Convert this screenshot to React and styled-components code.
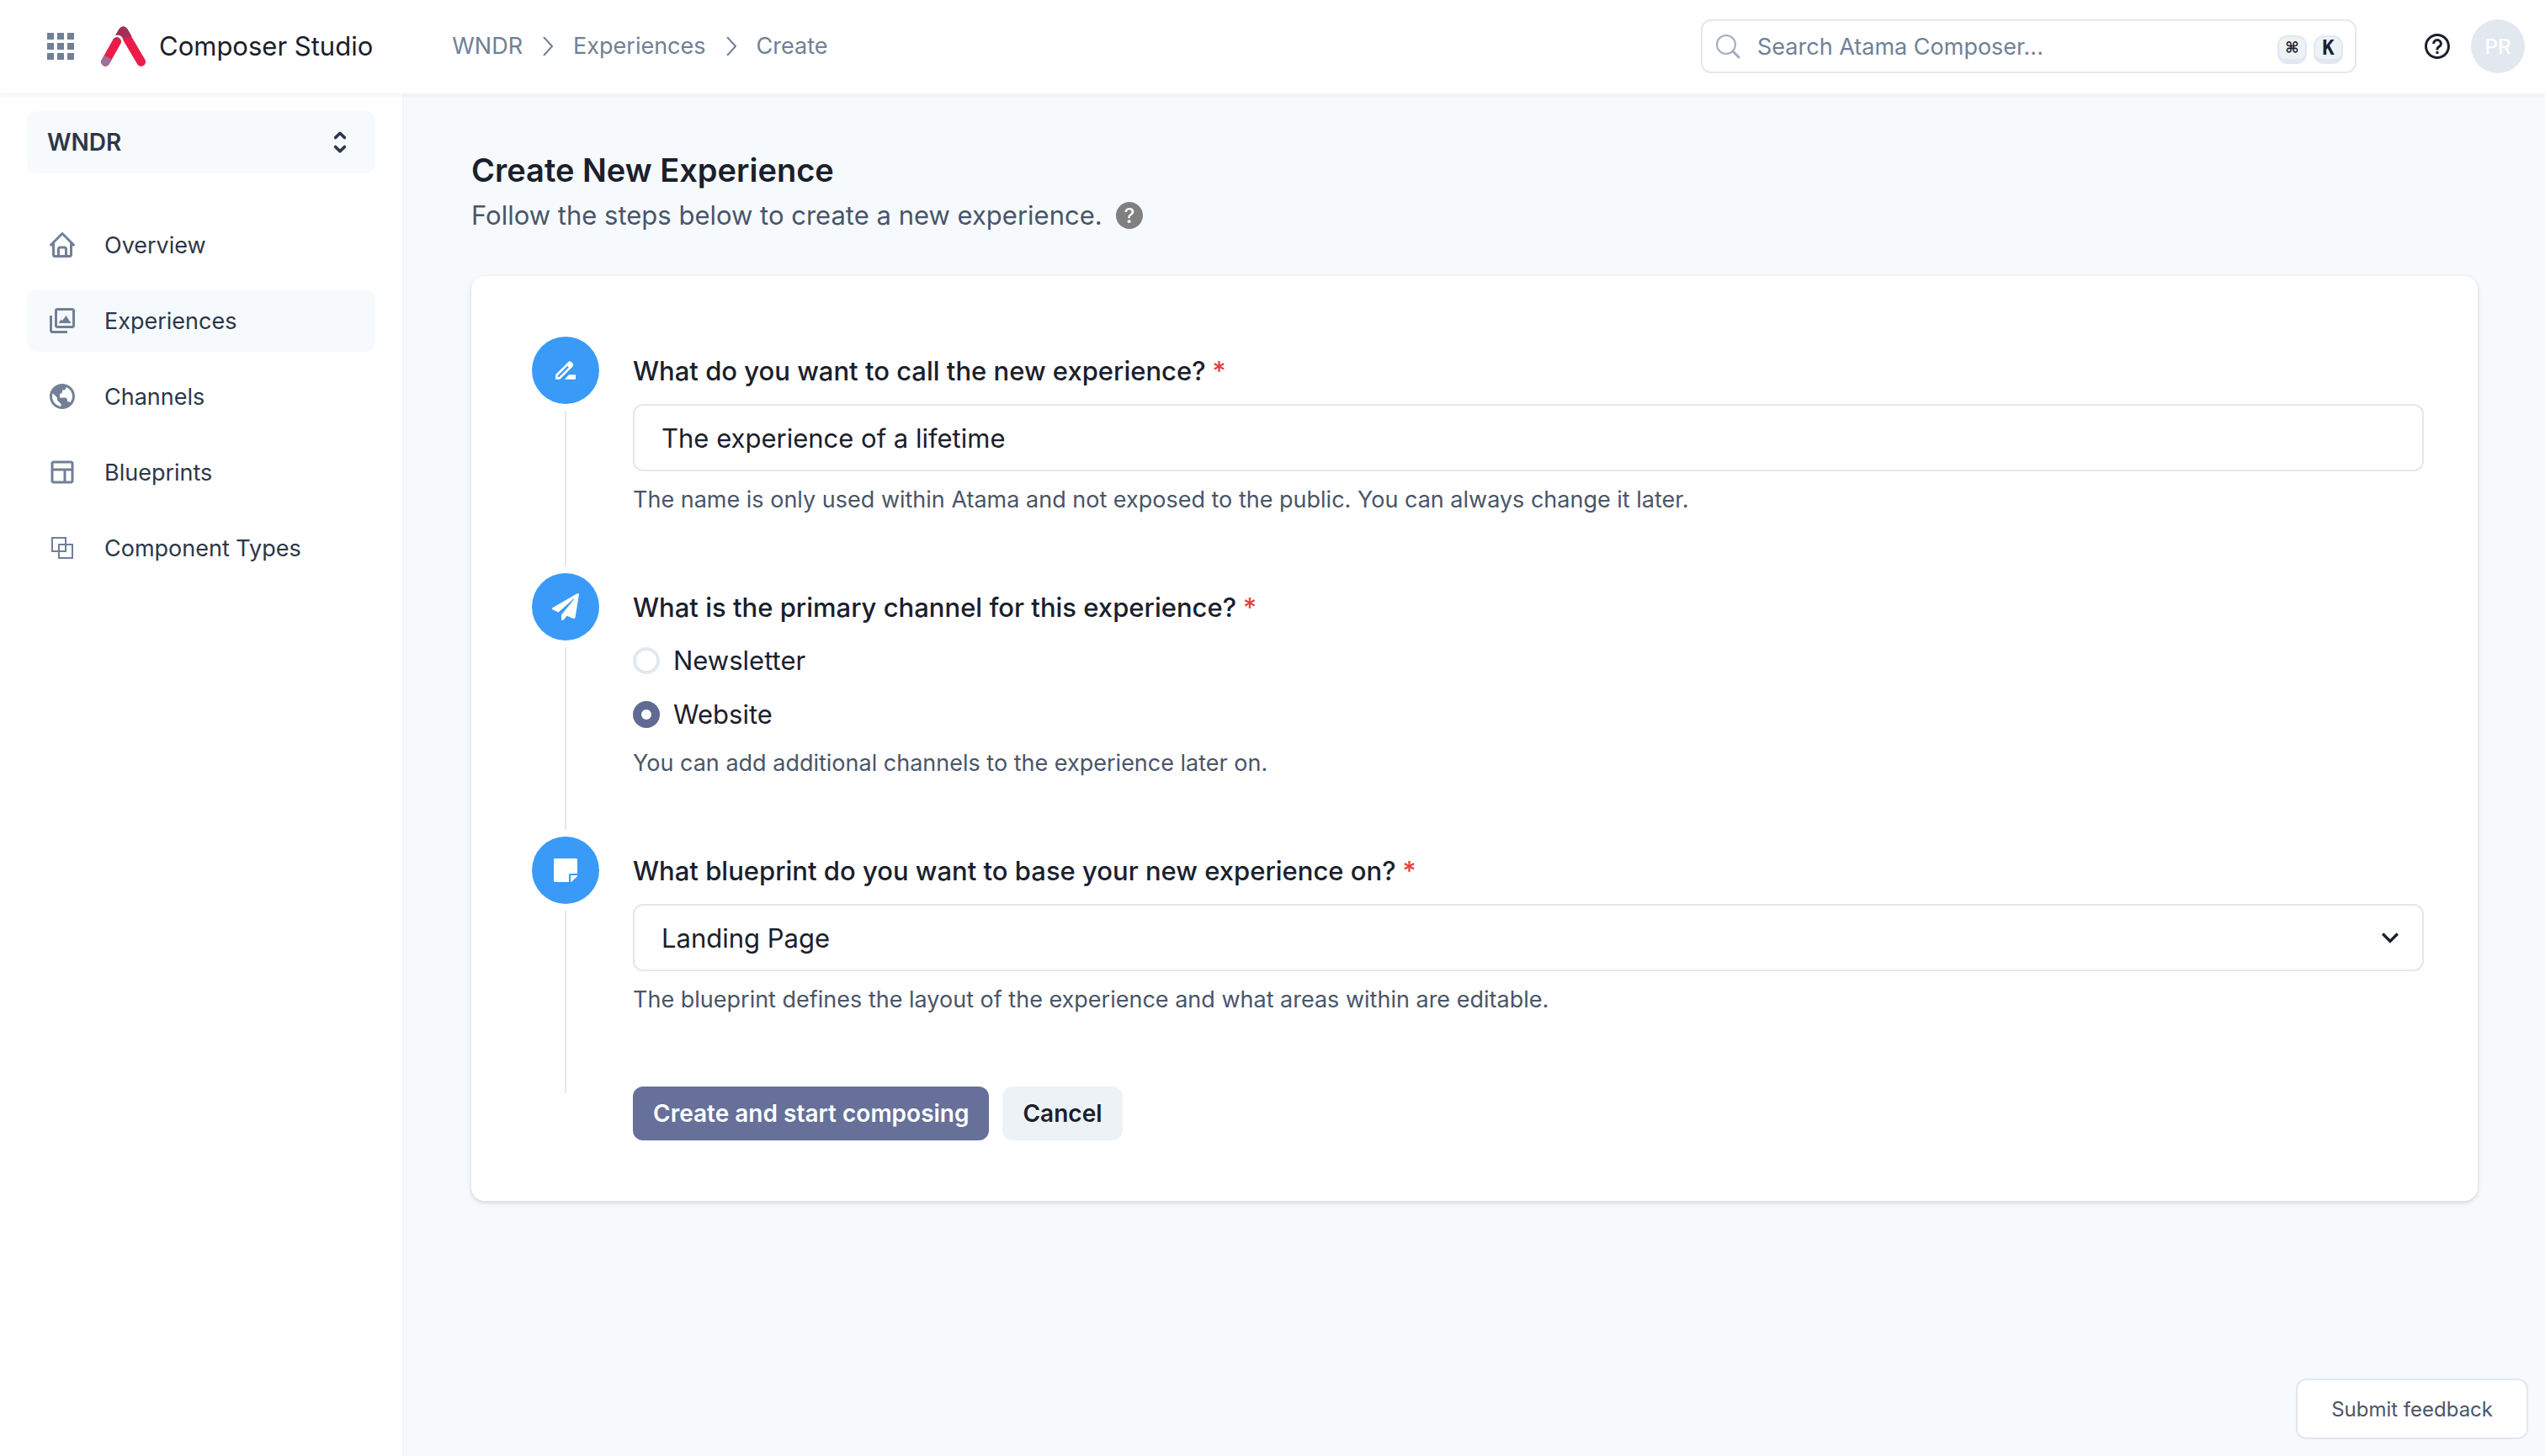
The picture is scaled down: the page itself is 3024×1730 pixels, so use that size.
import React from "react";
import styled, { createGlobalStyle } from "styled-components";
import { BiHome, BiImages, BiWorld, BiLayout, BiHelpCircle } from "react-icons/bi";
import { MdApps, MdDriveFileRenameOutline, MdExpandMore } from "react-icons/md";
import { FaPaperPlane, FaStickyNote } from "react-icons/fa";
import { HiSelector } from "react-icons/hi";
import { BsQuestionCircleFill } from "react-icons/bs";

const color = {
  ink: "#1a202c",
  strong: "#2d3748",
  text: "#4a5568",
  muted: "#718096",
  faint: "#a0aec0",
  line: "#e2e8f0",
  wash: "#edf2f7",
  page: "#f7fafc",
  canvas: "#f6fafd",
  brand: "#667099",
  blue: "#3a9af7",
  red: "#e53e3e",
};

const size = {
  title: "38px",
  large: "31px",
  label: "28px",
  base: "27px",
  small: "24px",
};

const GlobalStyle = createGlobalStyle`
  *, *::before, *::after { box-sizing: border-box; }
  body {
    margin: 0;
    background: ${color.canvas};
    color: ${color.ink};
    font-family: Inter, "Liberation Sans", sans-serif;
    font-size: ${size.base};
  }
  button, input, select { font: inherit; color: inherit; }
  h1, p { margin: 0; }
  svg { display: block; flex: none; }
`;

const Page = styled.div`
  display: flex;
  flex-direction: column;
  min-height: 100vh;
`;

const Header = styled.header`
  display: flex;
  align-items: center;
  height: 112px;
  padding: 0 24px 0 48px;
  background: #fff;
  border-bottom: 2px solid ${color.page};
  box-shadow: 0 2px 6px rgba(0, 0, 0, 0.05);
  z-index: 1;
`;

const IconButton = styled.button`
  display: flex;
  padding: 0;
  border: 0;
  background: none;
  color: ${(p) => p.$tone};
  cursor: pointer;
`;

const Brand = styled.a`
  display: flex;
  align-items: center;
  gap: 16px;
  margin-left: 24px;
  color: ${color.ink};
  font-size: ${size.large};
  line-height: 48px;
  text-decoration: none;
  white-space: nowrap;
`;

const Breadcrumb = styled.nav`
  display: flex;
  align-items: center;
  gap: 24px;
  margin-left: 94px;
  color: ${color.muted};
`;

const Crumb = styled.a`
  color: inherit;
  line-height: 42px;
  text-decoration: none;
`;

const SearchBox = styled.label`
  display: flex;
  align-items: center;
  gap: 20px;
  flex: 0 1 779px;
  height: 64px;
  margin-left: auto;
  padding: 0 14px 0 16px;
  border: 2px solid ${color.line};
  border-radius: 12px;
`;

const SearchInput = styled.input`
  flex: 1;
  min-width: 0;
  padding: 0;
  border: 0;
  outline: 0;
  background: none;

  &::placeholder {
    color: ${color.muted};
    opacity: 1;
  }
`;

const Shortcut = styled.span`
  display: flex;
  gap: 8px;
  margin-top: 8px;
`;

const Key = styled.kbd`
  display: flex;
  align-items: center;
  justify-content: center;
  width: 35px;
  height: 34px;
  border: 2px solid ${color.line};
  border-bottom-width: 6px;
  border-radius: 12px;
  background: ${color.wash};
  font: bold ${size.small} / 26px "DejaVu Sans Mono", "DejaVu Sans", monospace;
`;

const Account = styled.div`
  display: flex;
  align-items: center;
  gap: 22px;
  margin-left: 78px;
`;

const Avatar = styled.button`
  width: 64px;
  height: 64px;
  padding: 0;
  border: 0;
  border-radius: 50%;
  background: ${color.line};
  color: #fff;
  font-size: ${size.small};
  font-weight: 500;
`;

const Body = styled.div`
  display: flex;
  flex: 1;
`;

const Sidebar = styled.aside`
  display: flex;
  flex-direction: column;
  gap: 48px;
  flex: 0 0 480px;
  padding: 20px 32px;
  background: #fff;
  border-right: 2px solid #f1f6fa;
`;

const Workspace = styled.button`
  display: flex;
  align-items: center;
  justify-content: space-between;
  height: 74px;
  padding: 0 24px;
  border: 0;
  border-radius: 12px;
  background: ${color.canvas};
  color: ${color.strong};
  font-size: ${size.label};
  font-weight: 600;
`;

const Menu = styled.nav`
  display: flex;
  flex-direction: column;
  gap: 16px;
`;

const MenuLink = styled.a`
  display: flex;
  align-items: center;
  gap: 32px;
  height: 74px;
  padding: 0 24px;
  border-radius: 12px;
  background: ${(p) => (p.$active ? color.canvas : "transparent")};
  color: ${color.strong};
  text-decoration: none;

  svg { color: ${color.muted}; }
`;

const Main = styled.main`
  flex: 1;
  min-width: 0;
  padding: 62px 80px;
`;

const Title = styled.h1`
  font-size: ${size.title};
  font-weight: 600;
  line-height: 56px;
`;

const Lead = styled.div`
  display: flex;
  align-items: center;
  gap: 16px;
  margin-bottom: 46px;
  color: ${color.text};
  font-size: ${size.large};
  line-height: 52px;
`;

const Card = styled.form`
  padding: 72px 64px 72px 72px;
  border-radius: 16px;
  background: #fff;
  box-shadow: 0 2px 6px rgba(0, 0, 0, 0.1), 0 2px 4px rgba(0, 0, 0, 0.06);
`;

const StepRow = styled.section`
  display: flex;
  gap: 40px;
`;

const Rail = styled.div`
  display: flex;
  flex-direction: column;
  align-items: center;
  gap: 8px;
  padding-bottom: 8px;

  &::after {
    content: "";
    flex: 1;
    width: 2px;
    background: ${color.line};
  }
`;

const Bullet = styled.div`
  display: flex;
  align-items: center;
  justify-content: center;
  width: 80px;
  height: 80px;
  border-radius: 50%;
  background: ${color.blue};
  color: #fff;
`;

const StepContent = styled.div`
  display: flex;
  flex-direction: column;
  flex: 1;
  gap: 16px;
  min-width: 0;
  padding: 18px 0 ${(p) => (p.$last ? 101 : 69)}px;
`;

const Question = styled.label`
  font-size: ${size.large};
  font-weight: 500;
  line-height: 46px;
`;

const Required = styled.span`
  margin-left: 8px;
  color: ${color.red};
`;

const TextInput = styled.input`
  width: 100%;
  height: 80px;
  padding: 0 32px;
  border: 2px solid ${color.line};
  border-radius: 12px;
  background: #fff;
  font-size: ${size.large};
`;

const SelectWrap = styled.div`
  display: grid;
  align-items: center;

  > * { grid-area: 1 / 1; }

  svg {
    justify-self: end;
    margin-right: 20px;
    pointer-events: none;
  }
`;

const Select = styled.select`
  width: 100%;
  height: 80px;
  padding: 0 32px;
  border: 2px solid ${color.line};
  border-radius: 12px;
  background: #fff;
  font-size: ${size.large};
  appearance: none;
`;

const Choice = styled.label`
  display: flex;
  align-items: center;
  gap: 16px;
  font-size: ${size.large};
  line-height: 48px;
`;

const Radio = styled.input`
  appearance: none;
  width: 32px;
  height: 32px;
  margin: 0;
  border: 4px solid ${color.line};
  border-radius: 50%;
  background: #fff;

  &:checked {
    border: 10px solid #606a92;
  }
`;

const Help = styled.p`
  color: ${color.text};
  line-height: 36px;
`;

const Actions = styled.div`
  display: flex;
  gap: 16px;
  margin: -16px 0 0 120px;
`;

const Button = styled.button`
  height: 64px;
  padding: 0 24px;
  border: 0;
  border-radius: 12px;
  background: ${(p) => (p.$primary ? color.brand : color.wash)};
  color: ${(p) => (p.$primary ? "#fff" : color.ink)};
  font-size: ${size.label};
  font-weight: 600;
`;

const Feedback = styled.button`
  position: fixed;
  right: 20px;
  bottom: 20px;
  height: 72px;
  padding: 0 40px;
  border: 2px solid ${color.line};
  border-radius: 12px;
  background: #fff;
  color: ${color.text};
  font-size: ${size.small};
`;

const Logo = () => (
  <svg width="53" height="48" viewBox="240 93 160 144" fill="none" aria-hidden="true">
    <defs>
      <clipPath id="leg-foot"><path d="M235 190 L285 215 L285 240 L235 240Z" /></clipPath>
      <clipPath id="leg-head"><path d="M270 125 H320 V134 L278 142Z" /></clipPath>
    </defs>
    <path d="M320 112 L384 221" stroke="#ec1c48" strokeWidth="32" strokeLinecap="round" />
    <path d="M291 126 L305 102 Q320 84 335 102 L350 129 L319 137 Q312 123 291 126Z" fill="#a32f59" />
    <path d="M297 148 L256 221" stroke="#ec1c48" strokeWidth="31" strokeLinecap="round" />
    <path d="M297 148 L256 221" stroke="#a07098" strokeWidth="31" strokeLinecap="round" clipPath="url(#leg-foot)" />
    <path d="M297 148 L256 221" stroke="#a32f59" strokeWidth="31" strokeLinecap="round" clipPath="url(#leg-head)" />
    <path d="M290 129 Q311 124 317 142" stroke="#fff" strokeWidth="6" />
  </svg>
);

const Chevron = () => (
  <svg width="12" height="22" viewBox="0 0 12 22" fill="none" stroke="currentColor" strokeWidth="2" aria-hidden="true">
    <path d="M1 0 L11 11 L1 22" />
  </svg>
);

const SearchIcon = () => (
  <svg width="29" height="29" viewBox="0 0 29 29" fill="none" stroke={color.faint} strokeLinecap="round" aria-hidden="true">
    <circle cx="12" cy="12" r="11" strokeWidth="2" />
    <path d="M20 20 L27 27" strokeWidth="3" />
  </svg>
);

const OverlapIcon = ({ size: side }) => (
  <svg width={side} height={side} viewBox="0 0 36 36" fill="none" stroke="currentColor" strokeWidth="2" aria-hidden="true">
    <rect x="6" y="6" width="16" height="16" />
    <rect x="14" y="14" width="16" height="16" />
  </svg>
);

const menu = [
  { label: "Overview", icon: BiHome },
  { label: "Experiences", icon: BiImages, active: true },
  { label: "Channels", icon: BiWorld },
  { label: "Blueprints", icon: BiLayout },
  { label: "Component Types", icon: OverlapIcon },
];

function Step({ icon: Icon, question, field, last, children }) {
  const isGroup = !field;
  return (
    <StepRow>
      <Rail>
        <Bullet><Icon size={32} /></Bullet>
      </Rail>
      <StepContent $last={last} role={isGroup ? "radiogroup" : undefined} aria-labelledby={isGroup ? "channel-question" : undefined}>
        <Question as={isGroup ? "div" : "label"} htmlFor={field} id={isGroup ? "channel-question" : undefined}>
          {question}
          <Required>*</Required>
        </Question>
        {children}
      </StepContent>
    </StepRow>
  );
}

export default function App() {
  return (
    <Page>
      <GlobalStyle />
      <Header>
        <IconButton type="button" aria-label="Apps" $tone={color.muted}>
          <MdApps size={48} />
        </IconButton>
        <Brand href="#home">
          <Logo />
          Composer Studio
        </Brand>
        <Breadcrumb aria-label="Breadcrumb">
          <Crumb href="#wndr">WNDR</Crumb>
          <Chevron />
          <Crumb href="#experiences">Experiences</Crumb>
          <Chevron />
          <Crumb href="#create">Create</Crumb>
        </Breadcrumb>
        <SearchBox>
          <SearchIcon />
          <SearchInput type="search" aria-label="Search" placeholder="Search Atama Composer..." />
          <Shortcut>
            <Key>⌘</Key>
            <Key>K</Key>
          </Shortcut>
        </SearchBox>
        <Account>
          <IconButton type="button" aria-label="Help" $tone={color.ink}>
            <BiHelpCircle size={36} />
          </IconButton>
          <Avatar type="button">PR</Avatar>
        </Account>
      </Header>
      <Body>
        <Sidebar>
          <Workspace type="button">
            WNDR
            <HiSelector size={36} />
          </Workspace>
          <Menu aria-label="Main">
            {menu.map(({ label, icon: Icon, active }) => (
              <MenuLink key={label} href={`#${label}`} $active={active}>
                <Icon size={36} />
                {label}
              </MenuLink>
            ))}
          </Menu>
        </Sidebar>
        <Main>
          <Title>Create New Experience</Title>
          <Lead>
            <p>Follow the steps below to create a new experience.</p>
            <BsQuestionCircleFill size={32} color="#808080" />
          </Lead>
          <Card>
            <Step icon={MdDriveFileRenameOutline} question="What do you want to call the new experience?" field="experience-name">
              <TextInput id="experience-name" type="text" defaultValue="The experience of a lifetime" />
              <Help>The name is only used within Atama and not exposed to the public. You can always change it later.</Help>
            </Step>
            <Step icon={FaPaperPlane} question="What is the primary channel for this experience?">
              <Choice>
                <Radio type="radio" name="channel" value="newsletter" />
                Newsletter
              </Choice>
              <Choice>
                <Radio type="radio" name="channel" value="website" defaultChecked />
                Website
              </Choice>
              <Help>You can add additional channels to the experience later on.</Help>
            </Step>
            <Step icon={FaStickyNote} question="What blueprint do you want to base your new experience on?" field="experience-blueprint" last>
              <SelectWrap>
                <Select id="experience-blueprint" defaultValue="landing">
                  <option value="landing">Landing Page</option>
                </Select>
                <MdExpandMore size={40} />
              </SelectWrap>
              <Help>The blueprint defines the layout of the experience and what areas within are editable.</Help>
            </Step>
            <Actions>
              <Button type="button" $primary>Create and start composing</Button>
              <Button type="button">Cancel</Button>
            </Actions>
          </Card>
        </Main>
      </Body>
      <Feedback type="button">Submit feedback</Feedback>
    </Page>
  );
}
